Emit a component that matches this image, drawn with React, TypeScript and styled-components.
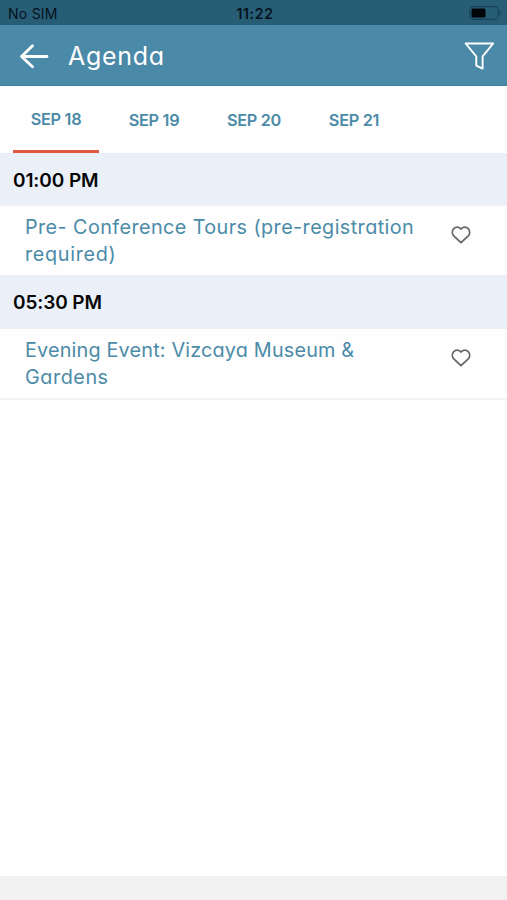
import React from "react";
import styled, { createGlobalStyle } from "styled-components";

const GlobalStyle = createGlobalStyle`
  * { box-sizing: border-box; }
  body { margin: 0; background: #fefefe; }
`;

const Screen = styled.div`
  display: flex;
  flex-direction: column;
  height: 900px;
  background: #fefefe;
  color: #4b8ba8;
  font-family: Inter, "Open Sans", sans-serif;
  font-feature-settings: "cv11";
`;

const StatusBar = styled.div`
  display: grid;
  grid-template-columns: 1fr auto 1fr;
  align-items: center;
  flex: none;
  height: 25px;
  padding: 3px 5px 0 8px;
  background: #285d76;
  color: #03121b;
  font-size: 14px;
  line-height: 20px;
  font-feature-settings: normal;
`;

const Carrier = styled.span`
  letter-spacing: 0.25px;
`;

const Clock = styled.span`
  font-weight: 600;
  letter-spacing: 0.7px;
`;

const BatteryIcon = styled.svg`
  justify-self: end;
  margin-top: -3px;
`;

const Header = styled.header`
  display: flex;
  align-items: center;
  flex: none;
  height: 61px;
  padding: 2px 12px 0 19px;
  background: #4a89a7;
  border-bottom: 1px solid #3f7f9c;
  color: #fff;
`;

const Title = styled.h1`
  flex: 1;
  margin: 0 0 0 19px;
  font-size: 25px;
  line-height: 36px;
  font-weight: 400;
  letter-spacing: 0.7px;
`;

const Tabs = styled.nav`
  display: flex;
  flex: none;
  height: 67px;
  padding-left: 13px;
  gap: 12px;
`;

const Tab = styled.a<{ $active?: boolean; $width: number }>`
  display: flex;
  justify-content: center;
  width: ${(p) => p.$width}px;
  padding-top: ${(p) => (p.$active ? 21 : 22)}px;
  border-bottom: 3px solid ${(p) => (p.$active ? "#df593c" : "transparent")};
  font-size: 16.3px;
  line-height: 24px;
  font-weight: 600;
  letter-spacing: -0.3px;
  white-space: nowrap;
`;

const TimeBand = styled.h2<{ $height: number }>`
  display: flex;
  align-items: center;
  flex: none;
  height: ${(p) => p.$height}px;
  margin: 0;
  padding: 2px 0 0 13px;
  background: #ebf0f8;
  color: #060606;
  font-size: 19px;
  line-height: 28px;
  font-weight: 600;
  letter-spacing: -0.1px;
`;

const Session = styled.article<{ $height: number; $last?: boolean }>`
  display: flex;
  align-items: flex-start;
  justify-content: space-between;
  flex: none;
  height: ${(p) => p.$height}px;
  padding: 8px 36.5px 0 25px;
  border-bottom: ${(p) => (p.$last ? "2px solid #f2f3f4" : "none")};
`;

const SessionTitle = styled.p`
  margin: 0;
  font-size: 19.8px;
  line-height: 27px;
  font-weight: 400;
`;

const Line = styled.span<{ $spacing: number }>`
  display: block;
  white-space: nowrap;
  letter-spacing: ${(p) => p.$spacing}px;
`;

const HeartIcon = styled.svg`
  flex: none;
  margin-top: 12px;
`;

const Footer = styled.footer`
  flex: none;
  height: 24px;
  margin-top: auto;
  background: #f1f1f1;
`;

const days = [
  { label: "SEP 18", width: 86 },
  { label: "SEP 19", width: 86 },
  { label: "SEP 20", width: 90 },
  { label: "SEP 21", width: 86 },
];

const slots = [
  {
    time: "01:00 PM",
    band: 53,
    height: 69,
    lines: [
      { text: "Pre- Conference Tours (pre-registration", spacing: 0.42 },
      { text: "required)", spacing: 0.7 },
    ],
  },
  {
    time: "05:30 PM",
    band: 54,
    height: 71,
    lines: [
      { text: "Evening Event: Vizcaya Museum &", spacing: 0.19 },
      { text: "Gardens", spacing: 0.55 },
    ],
  },
];

const Battery = () => (
  <BatteryIcon width="34" height="16" viewBox="0 0 34 16" fill="none">
    <rect x="1.7" y="1.7" width="28.6" height="12.6" rx="3.8" stroke="#174458" strokeWidth="1.2" />
    <rect x="3.5" y="3.5" width="14" height="9" rx="1.5" fill="#000509" />
    <path d="M31.5 5.8c1.7.5 1.7 3.9 0 4.4z" fill="#174458" />
  </BatteryIcon>
);

const BackArrow = () => (
  <svg width="30" height="28" viewBox="0 0 30 28" fill="none" stroke="#fff" strokeWidth="2.8" strokeLinecap="round" strokeLinejoin="round">
    <path d="M28 14.5H2.5M13.5 3.8 2.5 14.5l11 10.3" />
  </svg>
);

const Funnel = () => (
  <svg width="32" height="30" viewBox="0 0 32 30" fill="none" stroke="#fff" strokeWidth="1.9" strokeLinejoin="round">
    <path d="M2.6 2.5h27.6L19.6 15.3v12.3l-6.3-3v-9.3z" />
  </svg>
);

const Heart = () => (
  <HeartIcon width="20" height="18" viewBox="0 0 20 18" fill="none" stroke="#66676a" strokeWidth="1.8" strokeLinejoin="round">
    <path d="M10 3C8.3.7 4.8.5 2.8 2.6.8 4.8.9 8 3 10.1l7 6.6 7-6.6c2.1-2.1 2.2-5.3.2-7.5C15.2.5 11.7.7 10 3z" />
  </HeartIcon>
);

export default function App() {
  return (
    <>
      <GlobalStyle />
      <Screen>
        <StatusBar>
          <Carrier>No SIM</Carrier>
          <Clock>11:22</Clock>
          <Battery />
        </StatusBar>
        <Header>
          <BackArrow />
          <Title>Agenda</Title>
          <Funnel />
        </Header>
        <Tabs>
          {days.map((day, i) => (
            <Tab key={day.label} $active={i === 0} $width={day.width}>
              {day.label}
            </Tab>
          ))}
        </Tabs>
        {slots.map((slot, i) => (
          <React.Fragment key={slot.time}>
            <TimeBand $height={slot.band}>{slot.time}</TimeBand>
            <Session $height={slot.height} $last={i === slots.length - 1}>
              <SessionTitle>
                {slot.lines.map((line) => (
                  <Line key={line.text} $spacing={line.spacing}>
                    {line.text}
                  </Line>
                ))}
              </SessionTitle>
              <Heart />
            </Session>
          </React.Fragment>
        ))}
        <Footer />
      </Screen>
    </>
  );
}
